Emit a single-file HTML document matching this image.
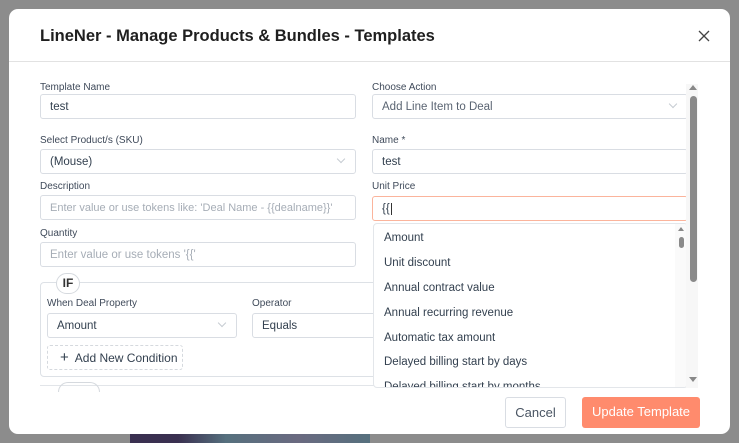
<!DOCTYPE html>
<html><head><meta charset="utf-8"><style>
*{box-sizing:border-box;margin:0;padding:0}
body{width:739px;height:443px;overflow:hidden;background:#8c8c8c;font-family:"Liberation Sans",sans-serif;position:relative}
.strip{position:absolute;left:130px;top:434px;width:240px;height:9px;background:linear-gradient(90deg,#3a3050 0%,#3a3050 20%,#56707e 40%,#6a6a80 70%,#56707e 100%)}
.modal{position:absolute;left:9px;top:9px;width:721px;height:425px;background:#fff;border-radius:9px;overflow:hidden}
.a{position:absolute;white-space:nowrap}
.title{left:31px;top:18px;font-size:16.5px;font-weight:bold;color:#1f1f1f}
.hline{left:0;top:52px;width:721px;height:1px;background:#e2e2e2}
.lbl{font-size:10px;color:#3f4a5a}
.inp{border:1px solid #d9dde3;border-radius:3px;height:25px;font-size:11.5px;color:#33404f;padding:6px 9px;background:#fff;overflow:hidden}
.ph{color:#a6adb6}
.chev{position:absolute;right:11px;top:6px;width:6px;height:6px;border-right:1px solid #c6cbd2;border-bottom:1px solid #c6cbd2;transform:rotate(45deg)}
.dd{left:364px;top:214px;width:315px;height:165px;border:1px solid #e3e6ea;border-radius:4px;background:#fff;overflow:hidden}
.dd div.it{position:absolute;left:10px;font-size:11.5px;color:#33404f}
.btn{border-radius:3px;font-size:13px;text-align:center;line-height:30px;height:31px}
</style></head><body>
<div class="strip"></div>
<div class="modal">
<div class="a title">LineNer - Manage Products &amp; Bundles - Templates</div>
<svg class="a" style="left:689px;top:21px" width="12" height="12" viewBox="0 0 12 12"><path d="M1 1L11 11M11 1L1 11" stroke="#444" stroke-width="1.3" fill="none"/></svg>
<div class="a hline"></div>

<div class="a lbl" style="left:31px;top:73px">Template Name</div>
<div class="a inp" style="left:31px;top:85px;width:316px">test</div>
<div class="a lbl" style="left:31px;top:126px">Select Product/s (SKU)</div>
<div class="a inp" style="left:31px;top:140px;width:316px">(Mouse)<span class="chev"></span></div>
<div class="a lbl" style="left:31px;top:172px">Description</div>
<div class="a inp ph" style="left:31px;top:186px;width:316px;font-size:11px">Enter value or use tokens like: 'Deal Name - {{dealname}}'</div>
<div class="a lbl" style="left:31px;top:219px">Quantity</div>
<div class="a inp ph" style="left:31px;top:233px;width:316px">Enter value or use tokens '{{'</div>

<div class="a" style="left:31px;top:273px;width:360px;height:95px;border:1px solid #dde1e6;border-radius:4px"></div>
<div class="a" style="left:47px;top:264px;width:24px;height:21px;border:1px solid #d5d9de;border-radius:11px;background:#fff;font-size:12px;font-weight:bold;color:#333;text-align:center;line-height:19px">IF</div>
<div class="a lbl" style="left:38px;top:289px">When Deal Property</div>
<div class="a inp" style="left:38px;top:304px;width:190px">Amount<span class="chev"></span></div>
<div class="a lbl" style="left:243px;top:289px">Operator</div>
<div class="a inp" style="left:243px;top:304px;width:140px">Equals</div>
<div class="a" style="left:38px;top:336px;width:136px;height:25px;border:1px dashed #d5d9de;border-radius:3px;font-size:12px;color:#33404f;line-height:23px;padding-left:12px"><span style="font-size:15px">+</span>&nbsp; Add New Condition</div>
<div class="a" style="left:31px;top:376px;width:340px;height:1px;background:#e2e5e9"></div>
<div class="a" style="left:49px;top:373px;width:42px;height:10px;border:1px solid #d5d9de;border-bottom:none;border-radius:10px 10px 0 0"></div>

<div class="a lbl" style="left:363px;top:73px">Choose Action</div>
<div class="a inp" style="left:363px;top:85px;width:316px;color:#5a6472">Add Line Item to Deal<span class="chev"></span></div>
<div class="a lbl" style="left:363px;top:126px">Name *</div>
<div class="a inp" style="left:363px;top:140px;width:316px">test</div>
<div class="a lbl" style="left:363px;top:172px">Unit Price</div>
<div class="a inp" style="left:363px;top:187px;width:316px;border-color:#fbb49c">{{<span style="border-left:1px solid #333;margin-left:1px"></span></div>

<div class="a dd">
<div class="it" style="top:8px">Amount</div>
<div class="it" style="top:33px">Unit discount</div>
<div class="it" style="top:58px">Annual contract value</div>
<div class="it" style="top:83px">Annual recurring revenue</div>
<div class="it" style="top:108px">Automatic tax amount</div>
<div class="it" style="top:132px">Delayed billing start by days</div>
<div class="it" style="top:157px">Delayed billing start by months</div>
<div class="a" style="right:0;top:0;width:12px;height:165px;background:#fafafa"></div>
<div class="a" style="right:3px;top:3px;width:0;height:0;border-left:3px solid transparent;border-right:3px solid transparent;border-bottom:4px solid #888"></div>
<div class="a" style="right:3px;top:13px;width:5px;height:11px;border-radius:3px;background:#8a8a8a"></div>
</div>

<div class="a" style="left:677px;top:75px;width:12px;height:304px;background:#f7f7f7"></div>
<div class="a" style="left:680px;top:76px;width:0;height:0;border-left:4px solid transparent;border-right:4px solid transparent;border-bottom:5px solid #888"></div>
<div class="a" style="left:681px;top:87px;width:7px;height:186px;border-radius:4px;background:#8a8a8a"></div>
<div class="a" style="left:680px;top:368px;width:0;height:0;border-left:4px solid transparent;border-right:4px solid transparent;border-top:5px solid #888"></div>

<div class="a btn" style="left:496px;top:388px;width:61px;border:1px solid #d9dde3;color:#4a5563">Cancel</div>
<div class="a btn" style="left:573px;top:388px;width:118px;background:#ff8b6d;color:#fff">Update Template</div>
</div>
</body></html>
